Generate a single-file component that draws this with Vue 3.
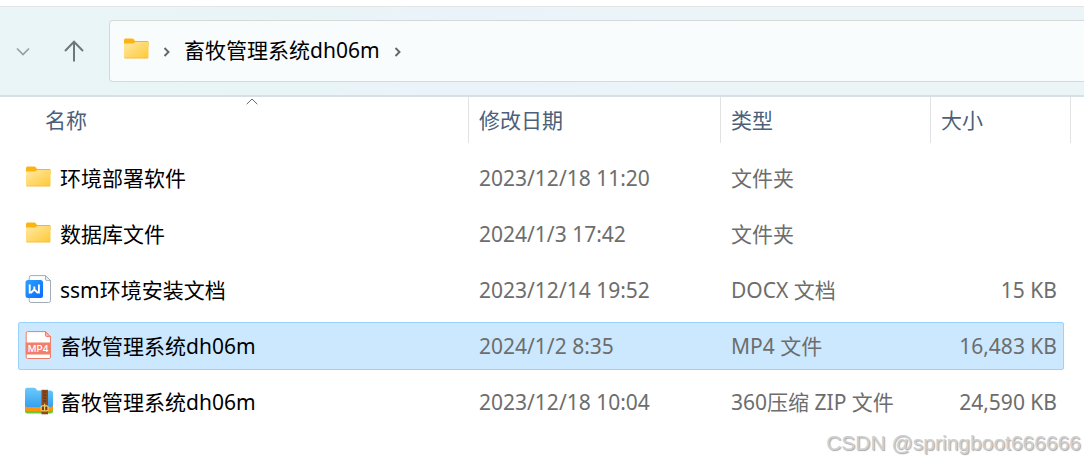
<script setup>
const columns = ['名称', '修改日期', '类型', '大小']

const files = [
  { icon: 'folder', name: '环境部署软件', date: '2023/12/18 11:20', type: '文件夹', size: '' },
  { icon: 'folder', name: '数据库文件', date: '2024/1/3 17:42', type: '文件夹', size: '' },
  { icon: 'doc', name: 'ssm环境安装文档', date: '2023/12/14 19:52', type: 'DOCX 文档', size: '15 KB' },
  { icon: 'mp4', name: '畜牧管理系统dh06m', date: '2024/1/2 8:35', type: 'MP4 文件', size: '16,483 KB', selected: true },
  { icon: 'zip', name: '畜牧管理系统dh06m', date: '2023/12/18 10:04', type: '360压缩 ZIP 文件', size: '24,590 KB' },
]
</script>

<template>
  <div class="explorer">
    <svg class="defs" width="0" height="0" aria-hidden="true">
      <defs>
        <linearGradient id="folderFace" x1="0" y1="0" x2="1" y2="1">
          <stop offset="0" stop-color="#ffe9a6" />
          <stop offset="1" stop-color="#ffc936" />
        </linearGradient>
        <linearGradient id="docBadge" x1="0" y1="0" x2="1" y2="1">
          <stop offset="0" stop-color="#2ba0ff" />
          <stop offset="1" stop-color="#0a6cff" />
        </linearGradient>
        <linearGradient id="zipFace" x1="0" y1="0" x2="0" y2="1">
          <stop offset="0" stop-color="#6dcbfb" />
          <stop offset="1" stop-color="#36a0ee" />
        </linearGradient>
        <symbol id="folder" viewBox="1 0.5 28 28">
          <path d="M2 5.500Q2 4 3.500 4H10q1.200 0 2 1l1 1.500h12.500q1 0 1 1V12H2z" fill="#fbb414" />
          <path d="M2 9h8.500q1.200 0 2-.8l.8-.7h12.200q1 0 1 1v14q0 1.300-1.300 1.300H3.300Q2 23.800 2 22.500z" fill="url(#folderFace)" />
          <path d="M2.500 23.500h23.500" stroke="#f4bd3c" stroke-width=".8" />
        </symbol>
        <symbol id="doc" viewBox="1 0 28 28">
          <path d="M7 .6h14.500l5 5V25.500q0 2-2 2H7q-1.800 0-1.800-2V2.500Q5.200.6 7 .6z" fill="#fff" stroke="#a3abb7" />
          <path d="M21.500.6v3.400q0 1.600 1.600 1.600h3.400z" fill="#eef0f3" stroke="#a3abb7" />
          <rect x="1.500" y="5" width="17.500" height="18" rx="2.500" fill="url(#docBadge)" />
          <path d="M5.700 9.500v8h1.500l3.100-3 3.100 3h1.500v-8M10.300 11.500v2.500" fill="none" stroke="#fff" stroke-width="1.900" />
        </symbol>
        <symbol id="mp4" viewBox="1 0 28 28">
          <path d="M3.500.6h18l5 5V26q0 1.500-1.500 1.500H3.500Q2.200 27.500 2.200 26V2Q2.200.6 3.500.6z" fill="#fff" stroke="#ee7b67" />
          <path d="M21.500.6v3.600q0 1.400 1.400 1.400h3.600z" fill="#f7b5a9" stroke="#ee7b67" />
          <rect x="1.700" y="11.500" width="25.300" height="12" fill="#f0806b" />
          <text x="14.300" y="21" text-anchor="middle" fill="#fff" font-family="Inter, sans-serif" font-size="9.500" font-weight="500">MP4</text>
        </symbol>
        <symbol id="zip" viewBox="0 0 28 28">
          <path d="M0 22h28v2q0 2.500-2.500 2.500h-23Q0 26.500 0 24z" fill="#70c72c" />
          <path d="M0 18h28v4.500q-1 1.500-3 1.500H3q-2 0-3-1.500z" fill="#ff920e" />
          <path d="M0 3Q0 .8 2.200.8H9q1.200 0 2 1l1.200 1.700h13Q28 3.500 28 6v12q0 2-2.500 2h-23Q0 20 0 18z" fill="url(#zipFace)" />
          <rect x="16.500" y="2.800" width="6.500" height="24.500" fill="#8a4b20" />
          <path d="M18.300 5h2.500M18.300 8h2.500M18.300 11h2.500M18.300 14h2.500" stroke="#5d2b10" stroke-width="1.200" />
          <rect x="16.200" y="18.800" width="6.800" height="5" rx="1" fill="#7a3c16" stroke="#f5cf63" stroke-width="1.200" />
          <path d="M19.600 16.800v7" stroke="#f5cf63" stroke-width="1.200" />
        </symbol>
      </defs>
    </svg>

    <header class="toolbar">
      <button class="tool recent" type="button" aria-label="最近的位置">
        <svg width="14" height="9" viewBox="0 0 14 9"><path d="M1 1.500l6 6 6-6" fill="none" stroke="#999fa1" stroke-width="1.700" /></svg>
      </button>
      <button class="tool up" type="button" aria-label="向上">
        <svg width="20" height="22" viewBox="0 0 20 22"><path d="M10 21.500V2M1 11l9-9.300 9 9.300" fill="none" stroke="#70777a" stroke-width="2" /></svg>
      </button>
      <nav class="address" aria-label="地址">
        <svg class="icon" aria-hidden="true"><use href="#folder" /></svg>
        <svg class="chevron" width="8" height="10" viewBox="0 0 8 10"><path d="M1.500 1l4 4-4 4" fill="none" stroke="#666" stroke-width="1.900" /></svg>
        <button class="crumb" type="button">畜牧管理系统dh06m</button>
        <svg class="chevron" width="8" height="10" viewBox="0 0 8 10"><path d="M1.500 1l4 4-4 4" fill="none" stroke="#666" stroke-width="1.900" /></svg>
      </nav>
    </header>

    <table class="list">
      <thead>
        <tr>
          <th v-for="(column, i) in columns" :key="column" scope="col">
            <svg v-if="i === 0" class="sort" width="12" height="7" viewBox="0 0 12 7" aria-hidden="true"><path d="M.7 6.200L6 1l5.300 5.200" fill="none" stroke="#666" /></svg>
            <button type="button">{{ column }}</button>
          </th>
        </tr>
      </thead>
      <tbody>
        <tr v-for="file in files" :key="file.icon + file.name" :class="{ selected: file.selected }">
          <td class="name">
            <svg class="icon" aria-hidden="true"><use :href="'#' + file.icon" /></svg>
            <span>{{ file.name }}</span>
          </td>
          <td>{{ file.date }}</td>
          <td>{{ file.type }}</td>
          <td class="size">{{ file.size }}</td>
        </tr>
      </tbody>
    </table>

    <div class="watermark">CSDN @springboot666666</div>
  </div>
</template>

<style>
body {
  background: #fff;
}
</style>

<style scoped>
.explorer {
  position: relative;
  min-height: 100vh;
  box-sizing: border-box;
  padding-top: 6px;
  overflow: hidden;
  font-family: "Noto Sans", "Noto Sans CJK SC", sans-serif;
  font-size: 21px;
  line-height: 30px;
  color: #6d6d6d;
}
.defs {
  position: absolute;
}
button {
  padding: 0;
  border: 0;
  background: none;
  font: inherit;
  color: inherit;
}
.icon {
  flex: none;
  width: 28px;
  height: 28px;
  margin-bottom: 2px;
}
.toolbar {
  display: flex;
  align-items: center;
  border-top: 1px solid #e3e6e7;
  border-bottom: 2px solid #d8e0e3;
  padding: 13px 0;
  background: linear-gradient(90deg, #e9f5f7 0%, #e9f4f7 30%, #eaf3fa 42%, #ebf4f8 60%, #ebf4f7 100%);
}
.tool {
  display: flex;
  align-items: center;
  justify-content: center;
  height: 40px;
}
.recent {
  width: 46px;
}
.up {
  width: 55px;
}
.address {
  flex: 1;
  display: flex;
  align-items: center;
  margin-left: 8px;
  padding: 14px 14px 16px 13px;
  border: 1px solid #d5d9da;
  border-right: 0;
  border-radius: 4px 0 0 4px;
  background: #f8fcfd;
  color: #000;
}
.chevron {
  margin: 4px 13px 0 12px;
}
.crumb + .chevron {
  margin-left: 14px;
}
.list {
  display: block;
}
.list thead,
.list tbody {
  display: block;
}
.list tr {
  display: grid;
  align-items: center;
}
.list thead tr {
  grid-template-columns: 1fr 252px 210px 141px;
  margin: 0 13px 11px 18px;
  color: #4c607a;
}
.list th {
  position: relative;
  box-sizing: border-box;
  height: 46px;
  padding: 8px 10px;
  border-left: 1px solid #e2e2e2;
  font-weight: 400;
  text-align: left;
}
.list th:first-child {
  padding-left: 26px;
  border-left-color: transparent;
}
.list th:last-child {
  border-right: 1px solid #e2e2e2;
}
.sort {
  position: absolute;
  top: 1px;
  left: calc(50% + 2px);
}
.list tbody tr {
  grid-template-columns: 1fr 252px 210px 132px;
  margin: 0 20px 8px 18px;
  padding: 8px 0;
  border: 1px solid transparent;
  border-radius: 2px;
}
.list tbody .selected {
  border-color: #99d1ff;
  background: #cce8ff;
}
.list td {
  padding: 0 10px;
}
.list .name {
  display: flex;
  align-items: center;
  gap: 7px;
  padding-left: 6px;
  color: #000;
}
.list .size {
  padding-right: 6px;
  text-align: right;
}
.watermark {
  position: absolute;
  right: 3px;
  bottom: 2px;
  font-family: "Liberation Sans", sans-serif;
  font-size: 21px;
  color: #cfcfcf;
  text-shadow: 1px 1px 1px #a8a8a8;
}
</style>
